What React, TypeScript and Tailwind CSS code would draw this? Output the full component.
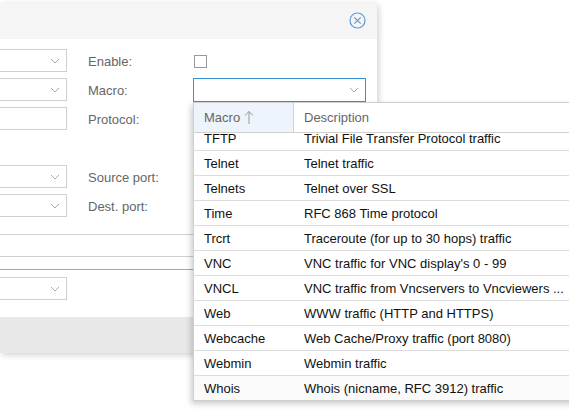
import React from "react";

const rows: [string, string][] = [
  ["TFTP", "Trivial File Transfer Protocol traffic"],
  ["Telnet", "Telnet traffic"],
  ["Telnets", "Telnet over SSL"],
  ["Time", "RFC 868 Time protocol"],
  ["Trcrt", "Traceroute (for up to 30 hops) traffic"],
  ["VNC", "VNC traffic for VNC display's 0 - 99"],
  ["VNCL", "VNC traffic from Vncservers to Vncviewers ..."],
  ["Web", "WWW traffic (HTTP and HTTPS)"],
  ["Webcache", "Web Cache/Proxy traffic (port 8080)"],
  ["Webmin", "Webmin traffic"],
  ["Whois", "Whois (nicname, RFC 3912) traffic"],
];

const Chevron = () => (
  <svg width="10" height="6" viewBox="0 0 10 6" className="shrink-0">
    <polyline points="1,1 5,5 9,1" fill="none" stroke="#a8a8a8" strokeWidth="1" />
  </svg>
);

const Combo = ({ arrow = true }: { arrow?: boolean }) => (
  <div className="h-[23px] w-[67px] border border-l-0 border-[#cfcfcf] bg-white flex items-center justify-end pr-[6px]">
    {arrow && <Chevron />}
  </div>
);

const Label = ({ text }: { text: string }) => (
  <div className="h-[23px] pt-[2px] flex items-center text-[13px] text-[#666]">{text}</div>
);

export default function App() {
  return (
    <div
      className="relative w-[569px] h-[413px] overflow-hidden bg-white"
      style={{ fontFamily: '"Liberation Sans", Arial, sans-serif' }}
    >
      {/* dialog */}
      <div className="absolute left-0 top-[2px] w-[377px] h-[351px] rounded-tr-[6px] bg-white shadow-[2px_2px_6px_rgba(0,0,0,0.18)] flex flex-col">
        <div className="h-[37px] bg-[#f5f5f5] rounded-tr-[6px] flex items-center justify-end pr-[11px]">
          <svg width="17" height="17" viewBox="0 0 17 17">
            <circle cx="8.5" cy="8.5" r="7.5" fill="none" stroke="#5a9ad8" strokeWidth="1.2" />
            <line x1="5.3" y1="5.3" x2="11.7" y2="11.7" stroke="#5a9ad8" strokeWidth="1.2" />
            <line x1="11.7" y1="5.3" x2="5.3" y2="11.7" stroke="#5a9ad8" strokeWidth="1.2" />
          </svg>
        </div>
        <div className="flex-1 pt-[10px]">
          <div className="flex">
            <div className="w-[88px] flex flex-col gap-[6px]">
              <Combo />
              <Combo />
              <Combo arrow={false} />
              <div className="h-[23px]" />
              <Combo />
              <Combo />
            </div>
            <div className="w-[106px] flex flex-col gap-[6px]">
              <Label text="Enable:" />
              <Label text="Macro:" />
              <Label text="Protocol:" />
              <div className="h-[23px]" />
              <Label text="Source port:" />
              <Label text="Dest. port:" />
            </div>
            <div className="flex flex-col gap-[6px]">
              <div className="h-[23px] pt-[1px] flex items-center">
                <div className="w-[13px] h-[13px] border border-[#999] bg-white" />
              </div>
              <div className="-ml-px h-[24px] w-[173px] border border-[#3892d4] bg-white flex items-center justify-end pr-[6px]">
                <Chevron />
              </div>
            </div>
          </div>
          <div className="mt-[17px] h-[23px] border-y border-[#cfcfcf] bg-white" />
          <div className="mt-[12px] border-t border-[#a6a6a6]" />
          <div className="mt-[7px]">
            <Combo />
          </div>
        </div>
        <div className="h-[36px] bg-[#e8e8e8]" />
      </div>

      {/* macro picker */}
      <div className="absolute left-[193px] top-[102px] w-[420px] h-[299px] bg-white border border-[#cfcfcf] shadow-[-2px_3px_6px_rgba(0,0,0,0.2)] flex flex-col text-[13px]">
        <div className="h-[30px] flex border-b border-[#cfcfcf] shrink-0">
          <div className="w-[100px] bg-[#eef4fb] border-r border-[#d4d4d4] flex items-center pl-[10px] gap-[4px] text-[#666]">
            <span>Macro</span>
            <svg width="10" height="15" viewBox="0 0 10 15">
              <line x1="5" y1="1.5" x2="5" y2="14" stroke="#999" strokeWidth="1" />
              <polyline points="1,5.5 5,1.5 9,5.5" fill="none" stroke="#999" strokeWidth="1" />
            </svg>
          </div>
          <div className="flex-1 flex items-center pl-[10px] text-[#666]">Description</div>
        </div>
        <div className="flex-1 overflow-hidden">
          <div className="-mt-[7px]">
            {rows.map(([m, d], i) => (
              <div
                key={m}
                className={`h-[25px] pt-[1px] flex items-center border-b border-[#dcdcdc] text-[#111] ${
                  i === rows.length - 1 ? "bg-[#fafafa]" : "bg-white"
                }`}
              >
                <div className="w-[100px] pl-[10px] whitespace-nowrap">{m}</div>
                <div className="pl-[10px] whitespace-nowrap">{d}</div>
              </div>
            ))}
          </div>
        </div>
      </div>
    </div>
  );
}
